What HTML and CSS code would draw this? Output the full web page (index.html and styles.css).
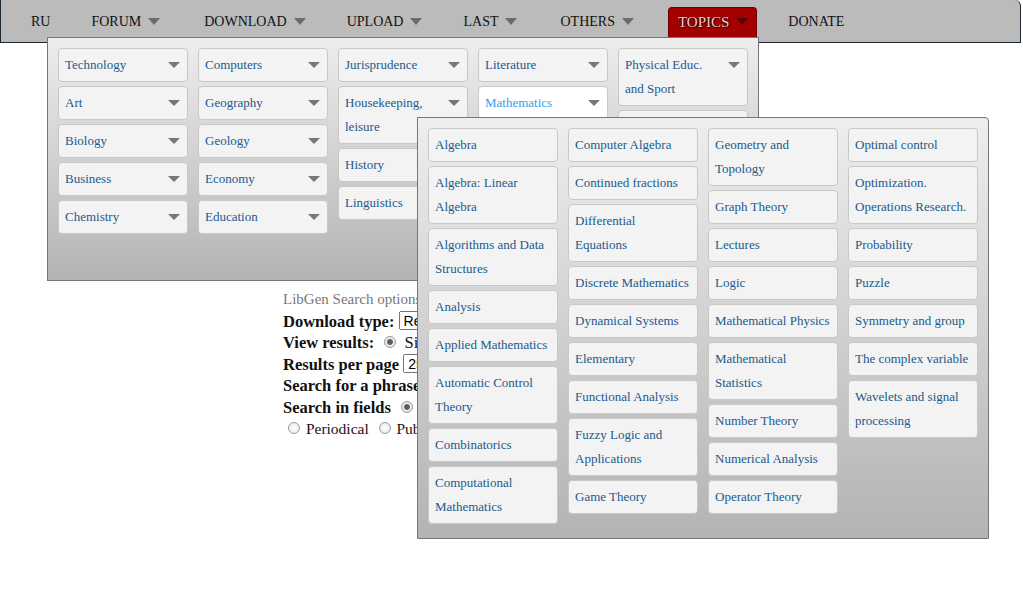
FILE: index.html
```html
<!DOCTYPE html>
<html lang="en">
<head>
    <meta charset="UTF-8">
    <title>Library Genesis</title>
    <link rel="stylesheet" href="styles.css">
</head>
<body>
    <div class="topbar">
        <ul class="nav">
            <li class="nav-item">RU</li>
            <li class="nav-item">FORUM <span class="caret"></span></li>
            <li class="nav-item">DOWNLOAD <span class="caret"></span></li>
            <li class="nav-item">UPLOAD <span class="caret"></span></li>
            <li class="nav-item">LAST <span class="caret"></span></li>
            <li class="nav-item">OTHERS <span class="caret"></span></li>
            <li class="nav-item active">TOPICS <span class="caret"></span></li>
            <li class="nav-item">DONATE</li>
        </ul>

        <!-- topics menu -->
        <div class="menu menu-topics">
            <div class="col">
                <div class="tile"><span>Technology</span><i class="arrow"></i></div>
                <div class="tile"><span>Art</span><i class="arrow"></i></div>
                <div class="tile"><span>Biology</span><i class="arrow"></i></div>
                <div class="tile"><span>Business</span><i class="arrow"></i></div>
                <div class="tile"><span>Chemistry</span><i class="arrow"></i></div>
            </div>
            <div class="col">
                <div class="tile"><span>Computers</span><i class="arrow"></i></div>
                <div class="tile"><span>Geography</span><i class="arrow"></i></div>
                <div class="tile"><span>Geology</span><i class="arrow"></i></div>
                <div class="tile"><span>Economy</span><i class="arrow"></i></div>
                <div class="tile"><span>Education</span><i class="arrow"></i></div>
            </div>
            <div class="col">
                <div class="tile"><span>Jurisprudence</span><i class="arrow"></i></div>
                <div class="tile"><span>Housekeeping,<br>leisure</span><i class="arrow"></i></div>
                <div class="tile"><span>History</span><i class="arrow"></i></div>
                <div class="tile"><span>Linguistics</span><i class="arrow"></i></div>
            </div>
            <div class="col">
                <div class="tile"><span>Literature</span><i class="arrow"></i></div>
                <div class="tile hover"><span>Mathematics</span><i class="arrow"></i></div>
                <div class="tile"><span>Medicine</span><i class="arrow"></i></div>
                <div class="tile"><span>Other Social Sciences</span><i class="arrow"></i></div>
            </div>
            <div class="col">
                <div class="tile"><span>Physical Educ.<br>and Sport</span><i class="arrow"></i></div>
                <div class="tile"><span>Physics</span><i class="arrow"></i></div>
                <div class="tile"><span>Psychology</span><i class="arrow"></i></div>
                <div class="tile"><span>Religion</span><i class="arrow"></i></div>
            </div>

            <!-- mathematics submenu -->
            <div class="menu menu-math">
                <div class="col">
                    <div class="tile"><span>Algebra</span></div>
                    <div class="tile"><span>Algebra: Linear<br>Algebra</span></div>
                    <div class="tile"><span>Algorithms and Data<br>Structures</span></div>
                    <div class="tile"><span>Analysis</span></div>
                    <div class="tile"><span>Applied Mathematics</span></div>
                    <div class="tile"><span>Automatic Control<br>Theory</span></div>
                    <div class="tile"><span>Combinatorics</span></div>
                    <div class="tile"><span>Computational<br>Mathematics</span></div>
                </div>
                <div class="col">
                    <div class="tile"><span>Computer Algebra</span></div>
                    <div class="tile"><span>Continued fractions</span></div>
                    <div class="tile"><span>Differential<br>Equations</span></div>
                    <div class="tile"><span>Discrete Mathematics</span></div>
                    <div class="tile"><span>Dynamical Systems</span></div>
                    <div class="tile"><span>Elementary</span></div>
                    <div class="tile"><span>Functional Analysis</span></div>
                    <div class="tile"><span>Fuzzy Logic and<br>Applications</span></div>
                    <div class="tile"><span>Game Theory</span></div>
                </div>
                <div class="col">
                    <div class="tile"><span>Geometry and<br>Topology</span></div>
                    <div class="tile"><span>Graph Theory</span></div>
                    <div class="tile"><span>Lectures</span></div>
                    <div class="tile"><span>Logic</span></div>
                    <div class="tile"><span>Mathematical Physics</span></div>
                    <div class="tile"><span>Mathematical<br>Statistics</span></div>
                    <div class="tile"><span>Number Theory</span></div>
                    <div class="tile"><span>Numerical Analysis</span></div>
                    <div class="tile"><span>Operator Theory</span></div>
                </div>
                <div class="col">
                    <div class="tile"><span>Optimal control</span></div>
                    <div class="tile"><span>Optimization.<br>Operations Research.</span></div>
                    <div class="tile"><span>Probability</span></div>
                    <div class="tile"><span>Puzzle</span></div>
                    <div class="tile"><span>Symmetry and group</span></div>
                    <div class="tile"><span>The complex variable</span></div>
                    <div class="tile"><span>Wavelets and signal<br>processing</span></div>
                </div>
            </div>
        </div>
    </div>

    <form class="search-options">
        <div class="caption">LibGen Search options</div>
        <div class="row"><b>Download type:</b> <select><option>Resumed dl with original filename</option></select></div>
        <div class="row"><b>View results:</b> <input type="radio" name="view" checked> Simple <input type="radio" name="view"> Detailed</div>
        <div class="row"><b>Results per page</b> <select><option>25</option></select></div>
        <div class="row"><b>Search for a phrase</b> (with spaces)</div>
        <div class="row"><b>Search in fields</b> <input type="radio" name="field" checked> The column set default <input type="radio" name="field"> Title <input type="radio" name="field"> Author(s)</div>
        <div class="row plain"><input type="radio" name="field"> Periodical <input type="radio" name="field"> Publisher <input type="radio" name="field"> ISBN</div>
    </form>
</body>
</html>
```

FILE: styles.css
```css
html, body {
    min-height: 100vh;
}
body {
    margin: 0;
    font-family: "Liberation Serif", serif;
    background: #fff;
    color: #222;
}
.topbar {
    position: relative;
    width: 1021px;
    height: 43px;
    box-sizing: border-box;
    background: #bbbbbb;
    border: 1px solid #1c2834;
    border-top: none;
    border-radius: 0 6px 0 0;
    z-index: 2;
}
.nav {
    list-style: none;
    margin: 0;
    padding: 7px 0 0 20px;
    display: flex;
    gap: 21px;
}
.nav-item {
    height: 35px;
    box-sizing: border-box;
    padding: 0 10px;
    font-size: 14px;
    line-height: 29px;
    color: #111;
    display: flex;
    align-items: flex-start;
    gap: 7px;
}
.nav-item:nth-child(2) {
    margin-right: 3px;
}
.nav-item:nth-child(6) {
    margin-left: 2px;
}
.caret {
    width: 0;
    height: 0;
    margin-top: 11px;
    border-left: 6.5px solid transparent;
    border-right: 6.5px solid transparent;
    border-top: 7px solid #6b6b6b;
}
.nav-item.active {
    margin-left: 3px;
    padding: 0 8px 0 9px;
    background: #a40000;
    border: 1px solid #6e0000;
    border-bottom: none;
    border-radius: 4px 4px 0 0;
    font-size: 15px;
    color: #f2cccc;
    text-shadow: 1px 1px 1px #2a0000, -1px 0 1px #3a0000;
    line-height: 28px;
}
.nav-item.active .caret {
    margin-top: 10px;
    border-top-color: #5a0000;
}
.menu {
    position: absolute;
    display: flex;
    gap: 10px;
    padding: 10px;
    box-sizing: border-box;
    background: linear-gradient(to bottom, #eeeeee, #b3b3b3);
    border: 1px solid #777;
}
.menu-topics {
    left: 46px;
    top: 37px;
    width: 712px;
    height: 244px;
}
.menu-math {
    left: 369px;
    top: 79px;
    width: 572px;
    height: 422px;
    border-radius: 0 4px 0 0;
}
.col {
    width: 130px;
    display: flex;
    flex-direction: column;
    gap: 4px;
}
.tile {
    display: flex;
    justify-content: space-between;
    align-items: flex-start;
    box-sizing: border-box;
    width: 130px;
    padding: 4px 3px 4px 6px;
    background: #f3f3f3;
    border: 1px solid #c8c8c8;
    border-radius: 4px;
    font-size: 13px;
    line-height: 24px;
    color: #1a5a8c;
    white-space: nowrap;
}
.tile.hover {
    background: #fff;
    color: #35a0ee;
}
.arrow {
    flex: none;
    width: 0;
    height: 0;
    margin: 9px 4px 0 0;
    border-left: 6px solid transparent;
    border-right: 6px solid transparent;
    border-top: 6px solid #777;
}
.search-options {
    margin: 246px 0 0 283px;
    font-size: 16.5px;
    line-height: 21.5px;
    color: #111;
}
.caption {
    font-size: 15px;
    color: #777;
}
.row {
    white-space: nowrap;
}
.row select {
    font-family: "Liberation Sans", sans-serif;
    font-size: 14px;
    height: 19px;
    vertical-align: 1px;
}
.row input[type="radio"] {
    appearance: none;
    width: 12px;
    height: 12px;
    margin: 0 4px 0 6px;
    border: 1px solid #9a9a9a;
    border-radius: 50%;
    background: radial-gradient(circle, #fff 0, #e4e4e4 100%);
    vertical-align: 0;
}
.row input[type="radio"]:checked {
    background: radial-gradient(circle, #555 0, #666 2.5px, #f0f0f0 3.5px, #ddd 100%);
}
.plain {
    font-size: 15.5px;
    color: #2a1010;
}
.plain input[type="radio"] {
    margin-right: 2px;
}
.plain input[type="radio"]:first-child {
    margin-left: 5px;
}
```
